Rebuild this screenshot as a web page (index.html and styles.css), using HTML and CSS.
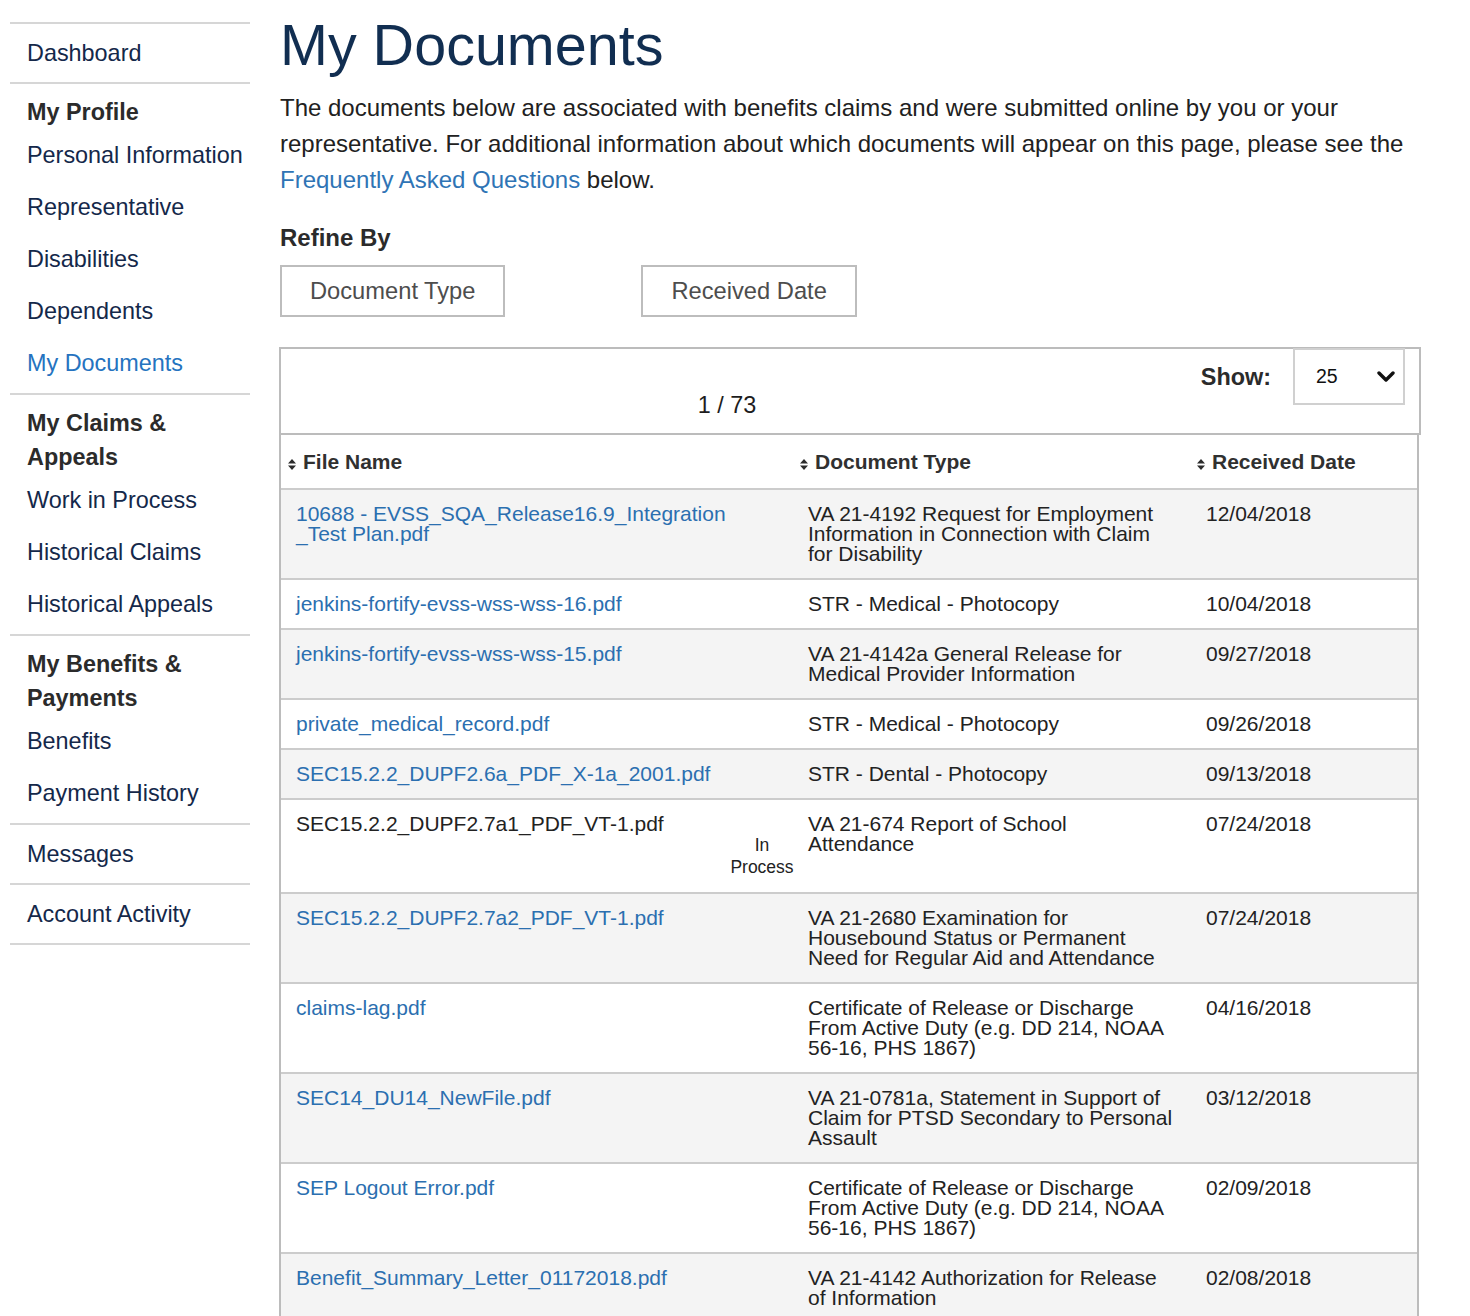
FILE: index.html
```html
<!DOCTYPE html>
<html lang="en">
<head>
<meta charset="utf-8">
<title>My Documents</title>
<link rel="stylesheet" href="styles.css">
</head>
<body>
<div class="page">
  <nav class="sidebar">
    <div class="nav-section single"><a class="nav-link" href="#">Dashboard</a></div>
    <div class="nav-section group">
      <div class="nav-heading">My Profile</div>
      <a class="nav-link" href="#">Personal Information</a>
      <a class="nav-link" href="#">Representative</a>
      <a class="nav-link" href="#">Disabilities</a>
      <a class="nav-link" href="#">Dependents</a>
      <a class="nav-link active" href="#">My Documents</a>
    </div>
    <div class="nav-section group">
      <div class="nav-heading">My Claims &amp; Appeals</div>
      <a class="nav-link" href="#">Work in Process</a>
      <a class="nav-link" href="#">Historical Claims</a>
      <a class="nav-link" href="#">Historical Appeals</a>
    </div>
    <div class="nav-section group">
      <div class="nav-heading">My Benefits &amp; Payments</div>
      <a class="nav-link" href="#">Benefits</a>
      <a class="nav-link" href="#">Payment History</a>
    </div>
    <div class="nav-section single"><a class="nav-link" href="#">Messages</a></div>
    <div class="nav-section single"><a class="nav-link" href="#">Account Activity</a></div>
  </nav>

  <main class="main">
    <h1 class="title">My Documents</h1>
    <p class="intro">The documents below are associated with benefits claims and were submitted online by you or your representative. For additional information about which documents will appear on this page, please see the <a href="#" class="intro-link">Frequently Asked Questions</a> below.</p>

    <h2 class="refine-title">Refine By</h2>
    <div class="refine-buttons">
      <button class="refine-btn" type="button">Document Type</button>
      <button class="refine-btn" type="button">Received Date</button>
    </div>

    <div class="results-top">
      <div class="show-row">
        <span class="show-label">Show:</span>
        <div class="select-box">
          <span class="select-value">25</span>
          <svg class="chevron" width="18" height="12" viewBox="0 0 18 12"><polyline points="2,2 9,9 16,2" fill="none" stroke="#111" stroke-width="3.4" stroke-linecap="round" stroke-linejoin="round"/></svg>
        </div>
      </div>
      <div class="pagination">1 / 73</div>
    </div>

    <div class="table-wrap">
      <table class="docs">
        <colgroup>
          <col class="c-file">
          <col class="c-status">
          <col class="c-type">
          <col class="c-date">
        </colgroup>
        <thead>
          <tr>
            <th colspan="2" class="th-file"><span class="sort"><svg width="8" height="11" viewBox="0 0 8 11"><path d="M4 0 L8 4.6 H0 Z M4 11 L0 6.4 H8 Z" fill="#2b2b2b"/></svg></span>File Name</th>
            <th class="th-type"><span class="sort"><svg width="8" height="11" viewBox="0 0 8 11"><path d="M4 0 L8 4.6 H0 Z M4 11 L0 6.4 H8 Z" fill="#2b2b2b"/></svg></span>Document Type</th>
            <th class="th-date"><span class="sort"><svg width="8" height="11" viewBox="0 0 8 11"><path d="M4 0 L8 4.6 H0 Z M4 11 L0 6.4 H8 Z" fill="#2b2b2b"/></svg></span>Received Date</th>
          </tr>
        </thead>
        <tbody>
          <tr>
            <td class="file"><a href="#">10688 - EVSS_SQA_Release16.9_Integration_Test Plan.pdf</a></td>
            <td class="status"></td>
            <td class="type">VA 21-4192 Request for Employment Information in Connection with Claim for Disability</td>
            <td class="date">12/04/2018</td>
          </tr>
          <tr>
            <td class="file"><a href="#">jenkins-fortify-evss-wss-wss-16.pdf</a></td>
            <td class="status"></td>
            <td class="type">STR - Medical - Photocopy</td>
            <td class="date">10/04/2018</td>
          </tr>
          <tr>
            <td class="file"><a href="#">jenkins-fortify-evss-wss-wss-15.pdf</a></td>
            <td class="status"></td>
            <td class="type">VA 21-4142a General Release for Medical Provider Information</td>
            <td class="date">09/27/2018</td>
          </tr>
          <tr>
            <td class="file"><a href="#">private_medical_record.pdf</a></td>
            <td class="status"></td>
            <td class="type">STR - Medical - Photocopy</td>
            <td class="date">09/26/2018</td>
          </tr>
          <tr>
            <td class="file"><a href="#">SEC15.2.2_DUPF2.6a_PDF_X-1a_2001.pdf</a></td>
            <td class="status"></td>
            <td class="type">STR - Dental - Photocopy</td>
            <td class="date">09/13/2018</td>
          </tr>
          <tr>
            <td class="file plain">SEC15.2.2_DUPF2.7a1_PDF_VT-1.pdf</td>
            <td class="status in-process">In Process</td>
            <td class="type">VA 21-674 Report of School Attendance</td>
            <td class="date">07/24/2018</td>
          </tr>
          <tr>
            <td class="file"><a href="#">SEC15.2.2_DUPF2.7a2_PDF_VT-1.pdf</a></td>
            <td class="status"></td>
            <td class="type">VA 21-2680 Examination for Housebound Status or Permanent Need for Regular Aid and Attendance</td>
            <td class="date">07/24/2018</td>
          </tr>
          <tr>
            <td class="file"><a href="#">claims-lag.pdf</a></td>
            <td class="status"></td>
            <td class="type">Certificate of Release or Discharge From Active Duty (e.g. DD 214, NOAA 56-16, PHS 1867)</td>
            <td class="date">04/16/2018</td>
          </tr>
          <tr>
            <td class="file"><a href="#">SEC14_DU14_NewFile.pdf</a></td>
            <td class="status"></td>
            <td class="type">VA 21-0781a, Statement in Support of Claim for PTSD Secondary to Personal Assault</td>
            <td class="date">03/12/2018</td>
          </tr>
          <tr>
            <td class="file"><a href="#">SEP Logout Error.pdf</a></td>
            <td class="status"></td>
            <td class="type">Certificate of Release or Discharge From Active Duty (e.g. DD 214, NOAA 56-16, PHS 1867)</td>
            <td class="date">02/09/2018</td>
          </tr>
          <tr>
            <td class="file"><a href="#">Benefit_Summary_Letter_01172018.pdf</a></td>
            <td class="status"></td>
            <td class="type">VA 21-4142 Authorization for Release of Information</td>
            <td class="date">02/08/2018</td>
          </tr>
        </tbody>
      </table>
    </div>
  </main>
</div>
</body>
</html>
```

FILE: styles.css
```css
* { box-sizing: border-box; }

html, body {
  margin: 0;
  padding: 0;
  background: #ffffff;
}

body {
  font-family: "Liberation Sans", Arial, Helvetica, sans-serif;
  color: #212121;
  font-size: 23.4px;
}

.page {
  display: flex;
  align-items: flex-start;
  padding-left: 10px;
}

/* Sidebar */
.sidebar {
  width: 240px;
  flex: 0 0 240px;
  margin-top: 22px;
  border-top: 2px solid #d6d6d6;
}

.nav-section {
  border-bottom: 2px solid #d6d6d6;
  padding: 0 0 0 17px;
}

.nav-section.single {
  line-height: 58px;
}

.nav-section.group {
  padding-top: 11px;
  padding-bottom: 4px;
}

.nav-heading {
  font-weight: bold;
  color: #2b2b2b;
  line-height: 34px;
}

.nav-link {
  display: block;
  color: #14284a;
  text-decoration: none;
}

.group .nav-link {
  line-height: 52px;
}

.nav-link.active {
  color: #2573c0;
}

/* Main */
.main {
  width: 1141px;
  margin-left: 30px;
  font-size: 24px;
}

.title {
  margin: 16px 0 0;
  font-size: 57.5px;
  line-height: 58px;
  font-weight: normal;
  color: #112e51;
}

.intro {
  margin: 16px 0 0;
  line-height: 36px;
  color: #212121;
}

.intro-link {
  color: #2f74b5;
  text-decoration: none;
}

.refine-title {
  margin: 25px 0 0;
  font-size: 24px;
  line-height: 30px;
  font-weight: bold;
  color: #2b2b2b;
}

.refine-buttons {
  display: flex;
  gap: 136px;
  margin-top: 12px;
}

.refine-btn {
  height: 52px;
  padding: 0 28px;
  border: 2px solid #bdbdbd;
  background: #ffffff;
  color: #4d4d4d;
  font-family: inherit;
  font-size: 23.7px;
  line-height: 48px;
}

/* Results header box */
.results-top {
  width: 1142px;
  margin: 30px 0 0 -1px;
  border: 2px solid #bcbcbc;
  padding-bottom: 14px;
  font-size: 23.4px;
}

.show-row {
  display: flex;
  justify-content: flex-end;
  align-items: center;
  height: 56px;
  padding-right: 14px;
}

.show-label {
  font-weight: bold;
  color: #2b2b2b;
  margin-right: 22px;
}

.select-box {
  width: 112px;
  height: 57px;
  margin-top: -1px;
  border: 2px solid #d0d0d0;
  display: flex;
  align-items: center;
  justify-content: space-between;
  padding: 0 8px 0 21px;
}

.select-value {
  font-size: 19.5px;
  color: #111;
}

.pagination {
  width: 892px;
  margin-top: -14px;
  text-align: center;
  line-height: 28px;
  color: #1d1d1d;
}

/* Table */
.table-wrap {
  width: 1140px;
  margin-left: -1px;
  border-left: 2px solid #bcbcbc;
  border-right: 2px solid #bcbcbc;
}

.docs {
  width: 100%;
  border-collapse: collapse;
  table-layout: fixed;
  font-size: 21px;
  line-height: 20px;
}

.c-file { width: 449px; }
.c-status { width: 64px; }
.c-type { width: 396px; }
.c-date { width: 227px; }

.docs th {
  text-align: left;
  font-weight: bold;
  color: #303030;
  height: 54px;
  padding: 0 8px 0 7px;
  vertical-align: middle;
  white-space: nowrap;
}

.docs th.th-type { padding-left: 6px; }

.sort {
  display: inline-block;
  width: 8px;
  margin-right: 7px;
  vertical-align: -1px;
}

.sort svg { display: block; }

.docs tbody tr {
  border-top: 2px solid #cccccc;
}

.docs tbody tr:nth-child(odd) {
  background: #f4f4f4;
}

.docs td {
  vertical-align: top;
  padding: 14px 16px;
  color: #222;
}

.docs td.file {
  padding-left: 15px;
  padding-right: 0;
  word-break: break-all;
}

.docs td.file a {
  color: #2b6fb0;
  text-decoration: none;
}

.docs td.status {
  padding: 14px 0;
  text-align: center;
  font-size: 17.5px;
  line-height: 22px;
}

.docs td.status.in-process {
  padding-top: 34px;
}

.docs td.type {
  padding-left: 14px;
}
```
